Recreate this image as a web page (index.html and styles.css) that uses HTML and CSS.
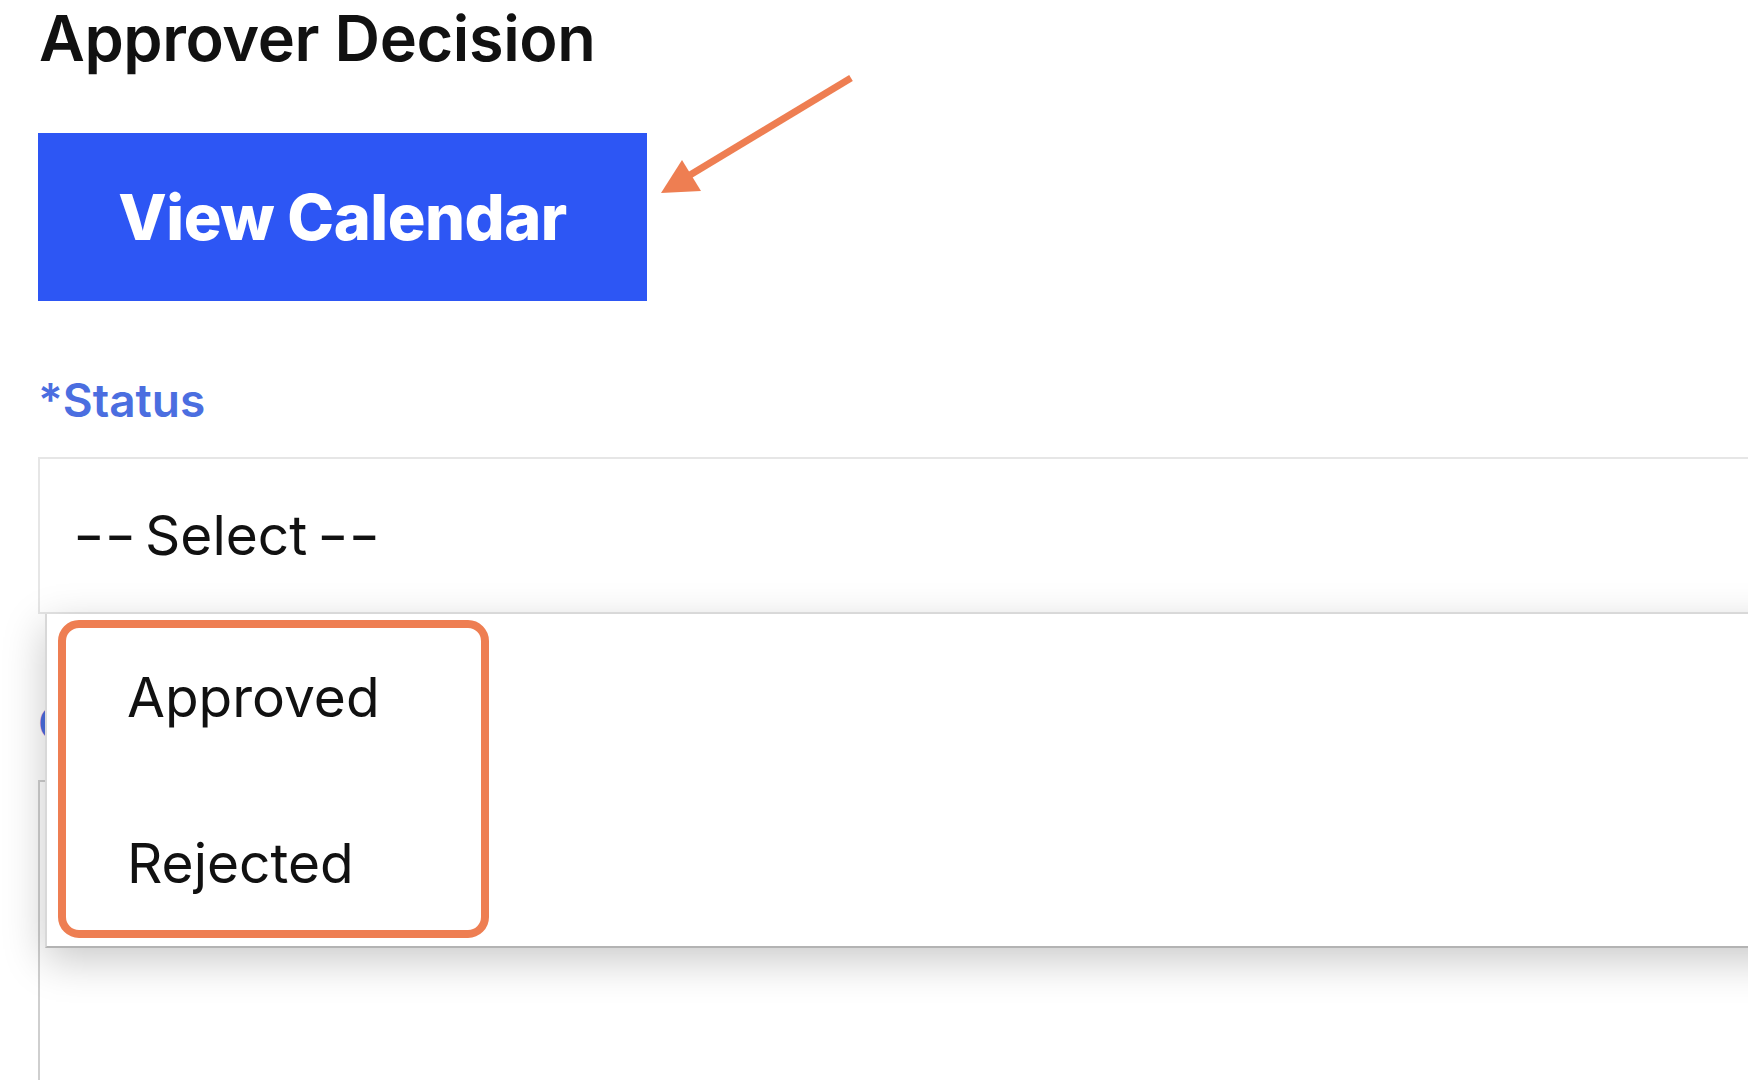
FILE: index.html
```html
<!DOCTYPE html>
<html lang="en">
<head>
<meta charset="utf-8">
<title>Approver Decision</title>
<link rel="stylesheet" href="styles.css">
</head>
<body>
  <main class="page">
    <h2 class="title">Approver Decision</h2>
    <button class="btn-cal" type="button">View Calendar</button>

    <div class="field field-status">
      <label class="label">*Status</label>
      <div class="select-wrap">
        <div class="select"><span class="dash dash-lead">--</span> Select <span class="dash">--</span></div>
        <ul class="menu">
          <li class="option">Approved</li>
          <li class="option">Rejected</li>
          <li class="highlight" aria-hidden="true"></li>
        </ul>
      </div>
    </div>

    <div class="field field-comments">
      <label class="label">Comments</label>
      <div class="textarea"></div>
    </div>
  </main>

  <svg class="arrow" width="220" height="140" viewBox="0 0 220 140" aria-hidden="true">
    <line x1="201" y1="8" x2="40" y2="105" stroke="#ee7e52" stroke-width="7" stroke-linecap="butt"/>
    <polygon points="11,123 32,90 51,121" fill="#ee7e52"/>
  </svg>
</body>
</html>
```

FILE: styles.css
```css
* {
  box-sizing: border-box;
}

html, body {
  margin: 0;
  padding: 0;
  background: #ffffff;
  overflow: hidden;
  height: 1080px;
}

body {
  position: relative;
  font-family: Inter, "Liberation Sans", sans-serif;
  color: #111111;
}

.page {
  padding-left: 38px;
}

.title {
  margin: 0 0 0 1px;
  font-size: 63px;
  font-weight: 600;
  line-height: normal;
  color: #111111;
  letter-spacing: -0.4px;
}

.btn-cal {
  display: flex;
  align-items: center;
  justify-content: center;
  margin-top: 57px;
  width: 609px;
  height: 168px;
  border: 0;
  border-radius: 0;
  background: #2d56f4;
  color: #ffffff;
  font-family: Inter, "Liberation Sans", sans-serif;
  font-size: 63px;
  font-weight: 800;
  letter-spacing: -0.5px;
  padding: 0;
}

.field-status {
  margin-top: 71px;
}

.field-comments {
  margin-top: 81px;
}

.label {
  display: block;
  padding-left: 0;
  font-size: 46px;
  font-weight: 600;
  line-height: normal;
  color: #4b6ee0;
}

.select-wrap {
  position: relative;
  margin-top: 29px;
}

.select {
  width: 1800px;
  height: 157px;
  border: 2px solid #e6e6e6;
  background: #ffffff;
  padding: 43px 0 0 33px;
  font-size: 55px;
  font-weight: 400;
  line-height: normal;
  word-spacing: -6px;
  color: #111111;
}

.dash {
  display: inline-block;
  transform: scaleX(1.25);
  transform-origin: 0 50%;
}

.dash-lead {
  margin-right: 12px;
}

.menu {
  position: absolute;
  top: 157px;
  left: 7px;
  width: 1800px;
  margin: 0;
  padding: 0;
  list-style: none;
  background: #ffffff;
  border-left: 2px solid #d8d8d8;
  border-bottom: 2px solid #b3b3b3;
  box-shadow: 0 12px 40px rgba(0, 0, 0, 0.22);
  z-index: 2;
}

.option {
  padding: 51px 0 51px 80px;
  font-size: 55px;
  font-weight: 400;
  line-height: 64px;
  color: #111111;
}

.highlight {
  position: absolute;
  left: 11px;
  top: 6px;
  width: 431px;
  height: 318px;
  border: 8px solid #ee7e52;
  border-radius: 21px;
}

.textarea {
  margin-top: 29px;
  width: 1800px;
  height: 400px;
  border: 2px solid #cfcfcf;
  background: #ffffff;
}

.arrow {
  position: absolute;
  left: 650px;
  top: 70px;
  z-index: 3;
}
```
